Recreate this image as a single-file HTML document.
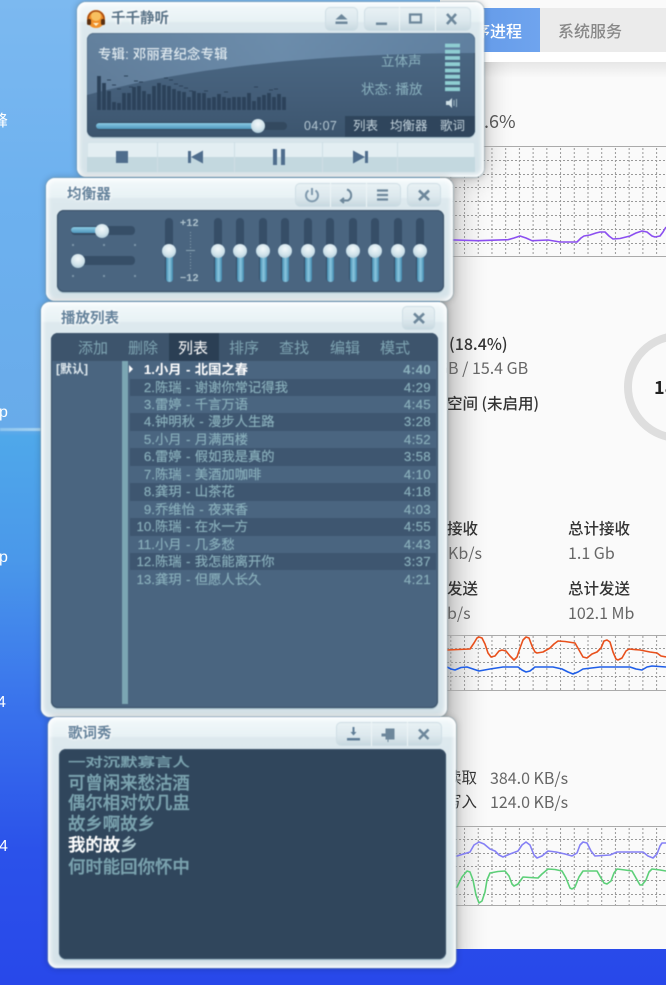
<!DOCTYPE html>
<html><head><meta charset="utf-8">
<style>
html,body{margin:0;padding:0;width:666px;height:985px;overflow:hidden}
body{position:relative;font-family:"Liberation Sans","Noto Sans CJK SC",sans-serif;background:linear-gradient(180deg,#7cb9f0 0,#6db1ef 200px,#68abea 428px,#4fa8ea 436px,#4a98ea 560px,#3a74ec 700px,#2b52ea 850px,#2848ea 985px)}
.a{position:absolute;white-space:nowrap}
.app{position:absolute;left:440px;top:0;width:226px;height:949px;background:#fafafa;font-family:"Noto Sans CJK SC","Liberation Sans",sans-serif;overflow:hidden}
.app .t{position:absolute;white-space:nowrap;color:#666;font-size:16px;line-height:20px}
.app .b{color:#333;font-weight:500;font-size:16px}
.win{position:absolute;border-radius:9px;background:linear-gradient(180deg,#f3f9fb 0,#e8f2f5 19px,#dde9ee 21px,#d5e3e9 100%);box-shadow:0 0 0 1px rgba(120,150,165,.45),0 0 7px 1px rgba(0,0,0,.18),inset 0 0 5px 2px #fff;filter:blur(.4px)}
.win .title{position:absolute;white-space:nowrap;color:#64829b;font-size:14.5px;font-weight:bold;line-height:20px;text-shadow:0 0 3px #fff,0 0 3px #fff}
.disp{position:absolute;border-radius:7px;background:#4a6580;box-shadow:inset 0 0 0 1px #3a5168,0 1px 1px #9ab5c2;overflow:hidden}
.grp{position:absolute;border:1px solid #cfdee5;border-radius:5px;background:linear-gradient(180deg,#e8f1f4 0,#dde9ee 55%,#c8d9e0 100%);box-sizing:border-box}
.grp svg{position:absolute;left:-1px;top:-1px;width:calc(100% + 2px);height:calc(100% + 2px)}
.vt{position:absolute;width:8px;height:64px;top:218px;background:#364e67;border-radius:4px}
.vf{position:absolute;left:.5px;right:.5px;bottom:0;top:33px;background:linear-gradient(90deg,#3f88ad,#8cc8e0,#3f88ad);border-radius:3px}
.kn{position:absolute;width:14px;height:14px;border-radius:7px;background:radial-gradient(circle at 50% 35%,#f2f8fa 0,#cfe2ea 55%,#94b6c8 100%)}
.row{position:absolute;left:79px;width:306px;height:17.45px;line-height:17.5px;font-size:13.3px;color:#8ab0bc;word-spacing:.7px;-webkit-text-stroke:.15px #8ab0bc}
.row .n{position:absolute;left:0;width:25px;text-align:right}
.row .s{position:absolute;left:25px;white-space:nowrap}
.row .d{position:absolute;right:5px;letter-spacing:.3px}
.row.e{background:#3e5670}
.tab{position:absolute;top:0;height:28px;line-height:29px;font-size:15px;color:#7ea4b2;white-space:nowrap}
.ly{position:absolute;left:9px;color:#7aa2ae;font-size:17.4px;line-height:20px;font-weight:500;white-space:nowrap;-webkit-text-stroke:.35px #7aa2ae}
.lb{position:absolute;color:#fff;font-size:16px;line-height:18px;white-space:nowrap;filter:blur(.3px)}
</style></head>
<body>
<!-- desktop labels -->
<div class="lb" style="left:-8px;top:113px">峰</div>
<div class="lb" style="left:-1px;top:404px">p</div>
<div class="lb" style="left:-1px;top:549px">p</div>
<div class="lb" style="left:-3px;top:694px">4</div>
<div class="lb" style="left:-1px;top:838px">4</div>
<div class="a" style="left:0;top:428px;width:41px;height:3px;background:linear-gradient(90deg,#8cc4ee,#a8d4f2);filter:blur(.5px)"></div>

<!-- app -->
<div class="app">
<div style="position:absolute;left:-100px;top:-20px;width:144px;height:197px;background:#000;opacity:.26;filter:blur(14px)"></div>
<div style="position:absolute;left:-100px;top:177px;width:115px;height:800px;background:#000;opacity:.3;filter:blur(16px)"></div>
<div style="position:absolute;left:0;top:0;width:226px;height:8px;background:#fafafa"></div>
<div style="position:absolute;left:0;top:8px;width:100px;height:44px;background:linear-gradient(90deg,#5f96e6,#6fa4ee)"></div>
<div style="position:absolute;left:100px;top:8px;width:126px;height:44px;background:#ebebeb"></div>
<div style="position:absolute;left:0;top:52px;width:226px;height:10px;background:#fff"></div>
<div style="position:absolute;left:0;top:62px;width:226px;height:16px;background:linear-gradient(180deg,rgba(0,0,0,.08),rgba(0,0,0,0))"></div>
<div class="t" style="right:144px;top:20px;color:#fff;font-weight:500;font-size:16px">应用程序进程</div>
<div class="t" style="left:118px;top:20px;color:#888;font-size:16px;font-weight:500">系统服务</div>
<div class="t" style="left:44px;top:111px;font-size:18px;color:#555">.6%</div>
<div class="t b" style="left:9px;top:333px">(18.4%)</div>
<div class="t" style="left:-3px;top:357px">GB / 15.4 GB</div>
<div class="t b" style="left:7px;top:393px;font-size:15.5px">空间 (未启用)</div>
<div class="t b" style="left:7px;top:518px;font-size:15.5px">接收</div>
<div class="t" style="left:8px;top:542px">Kb/s</div>
<div class="t b" style="left:128px;top:518px;font-size:15.5px">总计接收</div>
<div class="t" style="left:128px;top:542px">1.1 Gb</div>
<div class="t b" style="left:7px;top:578px;font-size:15.5px">发送</div>
<div class="t" style="left:7px;top:602px">b/s</div>
<div class="t b" style="left:128px;top:578px;font-size:15.5px">总计发送</div>
<div class="t" style="left:128px;top:602px">102.1 Mb</div>
<div class="t b" style="left:6px;top:767px;font-size:15.5px;font-weight:400">读取</div>
<div class="t" style="left:50px;top:767px">384.0 KB/s</div>
<div class="t b" style="left:6px;top:791px;font-size:15.5px;font-weight:400">写入</div>
<div class="t" style="left:50px;top:791px">124.0 KB/s</div>
<div class="t b" style="left:214px;top:377px;font-weight:700;font-size:18px;color:#222">18.4%</div>
</div>
<svg class="a" style="left:0;top:0" width="666" height="985" viewBox="0 0 666 985" fill="none">
<defs>
<pattern id="v" x="450.3" y="0" width="13.72" height="985" patternUnits="userSpaceOnUse"><path d="M.5 0V985" stroke="#999" stroke-dasharray="2 2"/></pattern>
</defs>
<circle cx="679" cy="387" r="51" stroke="#dedede" stroke-width="8"/>
<rect x="447" y="147" width="219" height="109" fill="url(#v)"/>
<path d="M447 160.500H666M447 174.500H666M447 187.500H666M447 201.500H666M447 215.500H666M447 229.500H666M447 243.500H666" stroke="#999" stroke-dasharray="2 2"/>
<path d="M447 146.500H666M447 256.500H666" stroke="#aaa"/>
<path fill="none" stroke="#8b4ff0" stroke-width="1.600" stroke-linejoin="round" d="M447 240L455 240 478 240.700 508 239.700 514 238 520 236 526 238 532 240.700 548 240 554 241 560 242 577 242 581 238 584 236 590 235 596 233 600 232 605 232 609 236 613 239 620 238.500 630 236 636 233 642 231 647 232 652 236 655 237 660 236 663 232 666 227"/>
<rect x="447" y="636" width="219" height="54" fill="url(#v)"/>
<path d="M447 648.500H666M447 662.500H666M447 676.500H666" stroke="#999" stroke-dasharray="2 2"/>
<path d="M447 635.500H666M447 690.500H666" stroke="#aaa"/>
<path fill="none" stroke="#e8501c" stroke-width="1.600" stroke-linejoin="round" d="M447 650L470 649 474 643 477 638 479 637 482 638 485 644 488 653 491 657 495 656 499 651 502 650 506 651 510 656 514 660 517 657 520 648 523 640 526 637 529 638 532 646 535 652 537 653 543 652 550 648 554 644 558 641 565 641.500 575 643 579 650 583 657 587 658 592 654 597 652 601 648 604 641 607 640 610 642 613 652 616 659 618 660 622 658 626 651 629 649 640 650 650 652 657 653 661 656 666 657"/>
<path fill="none" stroke="#1f5ee8" stroke-width="1.600" stroke-linejoin="round" d="M447 667L451 669 455 670 461 667.500 467 667 473 669 479 671 490 669 503 667 518 667 522 670 526 672 530 671 535 667 553 667 562 669 568 672 573 674 578 672 583 669 600 667 630 667 636 669 642 670 647 667 652 666 666 667"/>
<rect x="447" y="827" width="219" height="78" fill="url(#v)"/>
<path d="M447 839.500H666M447 853.500H666M447 866.500H666M447 880.500H666M447 894.500H666" stroke="#999" stroke-dasharray="2 2"/>
<path d="M447 826.500H666M447 905.500H666" stroke="#aaa"/>
<path fill="none" stroke="#8580f5" stroke-width="1.600" stroke-linejoin="round" d="M447 857L457 856 470 852 474 845 479 842 484 844 490 849 495 851 499 855 503 857 510 854 518 851 522 845 526 842 530 845 534 855 537 858 542 856 548 851 556 852 565 854 572 856 577 853 580 845 583 842 587 843 591 851 595 856 610 855 617 852 643 852 648 856 653 858 657 854 660 846 662 843 666 843"/>
<path fill="none" stroke="#5ccf78" stroke-width="1.600" stroke-linejoin="round" d="M447 890L457 887 462 877 467 871 470 872 473 880 476 895 479 903 482 901 485 892 487 880 490 873 498 871.500 505 871 509 876 512 884 514 886 518 884 523 877 530 877.500 538 878 542 874 548 869 555 869.500 562 871 566 878 570 888 572 889 575 887 579 877 583 871 590 871 597 871 601 878 604 883 607 884 611 881 614 873 617 869 625 870 632 871 636 878 640 885 642 885 646 880 649 872 652 869 660 870 666 871"/>
</svg>

<!-- main window -->
<div class="win" style="left:77px;top:2px;width:407px;height:175px">
 <svg class="a" style="left:8px;top:6px" width="22" height="22" viewBox="0 0 22 22"><circle cx="11" cy="11" r="9" fill="#f0902a"/><circle cx="11" cy="8" r="5" fill="#f8c060"/><path d="M3 11a8 8 0 0 1 16 0" fill="none" stroke="#a84c10" stroke-width="1.600"/><rect x="2" y="11" width="4" height="6" rx="1.500" fill="#5a3010"/><rect x="16" y="11" width="4" height="6" rx="1.500" fill="#5a3010"/><path d="M8 15h6l-3 3z" fill="#fff3d0"/></svg>
 <div class="title" style="left:34px;top:7px;color:#5a7488">千千静听</div>
 <div class="grp" style="left:248px;top:5px;width:33px;height:24px"><svg viewBox="0 0 33 24"><path d="M16.500 7l6 5.500h-12zM10.500 14.500h12v2.500h-12z" fill="#6d879b"/></svg></div>
 <div class="grp" style="left:287px;top:5px;width:107px;height:24px"><svg viewBox="0 0 107 24"><path d="M35.500 0v24M71.500 0v24" stroke="#eef5f7"/><path d="M12 15.500h11v2.500h-11z" fill="#6d879b"/><path d="M46 7.500h11v8h-11z" fill="none" stroke="#6d879b" stroke-width="2.200"/><path d="M83 7l9 10M92 7l-9 10" stroke="#6d879b" stroke-width="2.600"/></svg></div>
 <div class="disp" style="left:10px;top:31px;width:388px;height:104px;background:linear-gradient(180deg,#4c6a86 0,#445e79 60%,#3c556e 100%)">
  <svg class="a" style="left:0;top:0" width="388" height="104"><defs><linearGradient id="sw" x1="0" y1="0" x2="1" y2="0"><stop offset="0" stop-color="#7a98b6" stop-opacity=".5"/><stop offset=".5" stop-color="#7a9cbc" stop-opacity=".7"/><stop offset="1" stop-color="#6e90b2" stop-opacity=".6"/></linearGradient></defs><path d="M0 0H388V20C250 20 110 32 0 62z" fill="url(#sw)"/></svg>
  <div class="a" style="left:11px;top:13px;color:#dfe9ef;font-size:13.400px;line-height:17px;letter-spacing:.15px;font-weight:500">专辑: 邓丽君纪念专辑</div>
  <div class="a" style="left:294px;top:20px;color:#8bb2bf;font-size:13.500px;line-height:17px">立体声</div>
  <div class="a" style="left:274px;top:48px;color:#8bb2bf;font-size:13.500px;line-height:17px">状态: 播放</div>
  <svg class="a" style="left:0;top:0" width="388" height="104" fill="none">
   <path transform="translate(-87,-33)" stroke="#2c425a" stroke-width="3.800" d="M99 110V76M104 110V83M109 110V91M114 110V102M119 110V103M124 110V93M129 110V93M134 110V87M139 110V86M144 110V91M149 110V94M154 110V86M159 110V83M164 110V85M169 110V86M174 110V89M179 110V91M184 110V92M189 110V97M194 110V91M199 110V93M204 110V93M209 110V98M214 110V97M219 110V94M224 110V97M229 110V98M234 110V97M239 110V97M244 110V97M249 110V93M254 110V101M259 110V97M264 110V95M269 110V93M274 110V97M279 110V94M284 110V97"/>
   <path transform="translate(-87,-33)" stroke="#2c425a" d="M107 80h4M112 85h4M117 89h4M124 76h4M129 87h4M134 81h4M139 82h4M164 78h4M169 80h4M174 84h4M179 86h4M184 88h4M189 91h4M204 91h4M224 92h4M254 87h4M269 90h4M274 89h4"/>
   <path stroke="#8fced2" stroke-width="3.800" d="M358 12.500h15M358 18.700h15M358 25h15M358 31.200h15M358 37.500h15M358 43.700h15M358 50h15M358 56.200h15"/>
   <path d="M359 68h3l3-3v10l-3-3h-3z" fill="#cfe0e6"/><path d="M367 67v6M369.500 66v8" stroke="#9fb8c4"/>
  </svg>
  <div class="a" style="left:9px;top:89px;width:191px;height:8px;border-radius:4px;background:#33495f"></div>
  <div class="a" style="left:9px;top:90px;width:162px;height:6px;border-radius:3px;background:linear-gradient(180deg,#8ccbe4,#4e97bd)"></div>
  <div class="kn" style="left:164px;top:86px"></div>
  <div class="a" style="left:217px;top:85px;color:#b4c7d2;font-size:12.500px;line-height:16px;letter-spacing:.4px">04:07</div>
  <div class="a" style="left:258px;top:83px;width:130px;height:21px;background:#2f455c"></div>
  <div class="a" style="left:266px;top:85px;color:#c3d3dc;font-size:12.500px;line-height:16px">列表</div>
  <div class="a" style="left:303px;top:85px;color:#c3d3dc;font-size:12.500px;line-height:16px">均衡器</div>
  <div class="a" style="left:353px;top:85px;color:#c3d3dc;font-size:12.500px;line-height:16px">歌词</div>
 </div>
 <div class="grp" style="left:10px;top:140px;width:388px;height:30px;border-radius:2px;border-color:#d5e3e9;background:#e3eef2"><svg viewBox="0 0 388 30"><path d="M0 15H388V30H0z" fill="#c3d8df"/><path d="M70.500 0v30M147.500 0v30M235.500 0v30M310.500 0v30" stroke="#cfdee5"/><path d="M29 9h12v12h-12z" fill="#4f6d8d"/><path d="M101 9h3v12h-3zM104 15l12-6.500v13z" fill="#4f6d8d"/><path d="M186 7h4v16h-4zM194 7h4v16h-4z" fill="#4f6d8d"/><path d="M266 8.500l12 6.500-12 6.500zM278 9h3v12h-3z" fill="#4f6d8d"/></svg></div>
</div>

<!-- EQ -->
<div class="win" style="left:46px;top:178px;width:407px;height:123px">
 <div class="title" style="left:21px;top:7px;letter-spacing:.2px">均衡器</div>
 <div class="grp" style="left:249px;top:5px;width:106px;height:24px"><svg viewBox="0 0 106 24"><path d="M35.500 0v24M71.500 0v24" stroke="#eef5f7"/><path d="M13.500 7.500a6 6 0 1 0 7 0M17 5v7" fill="none" stroke="#7f99ad" stroke-width="2"/><path d="M52 6.500a6 6 0 0 1 1 11h-6M49 15l-3 2.500 3 2.500" fill="none" stroke="#6d879b" stroke-width="2"/><path d="M82 7.500h11M82 12h11M82 16.500h11" stroke="#6d879b" stroke-width="2.200"/></svg></div>
 <div class="grp" style="left:361px;top:5px;width:34px;height:24px"><svg viewBox="0 0 34 24"><path d="M12 7.500l10 9.500M22 7.500l-10 9.500" stroke="#6d879b" stroke-width="2.600"/></svg></div>
 <div class="disp" style="left:11px;top:32px;width:387px;height:82px">
  <div class="a" style="left:14px;top:16px;width:64px;height:9px;border-radius:4px;background:#364e67"></div>
  <div class="a" style="left:14px;top:17px;width:32px;height:6px;border-radius:3px;background:linear-gradient(180deg,#8ccbe4,#4e97bd)"></div>
  <div class="kn" style="left:38px;top:14px"></div>
  <div class="a" style="left:14px;top:46px;width:64px;height:9px;border-radius:4px;background:#364e67"></div>
  <div class="kn" style="left:14px;top:44px"></div>
  <svg class="a" style="left:0;top:0" width="387" height="82"><path d="M15 34h2v2h-2zM46 34h2v2h-2zM77 34h2v2h-2zM15 65h2v2h-2zM46 65h2v2h-2zM77 65h2v2h-2z" fill="#7b95a8"/><path d="M133.500 22V60" stroke="#8aa4b3" stroke-dasharray="1 2"/><path d="M129 40.500h9" stroke="#8aa4b3"/></svg>
  <div class="a" style="left:123px;top:7px;color:#b0c4ce;font-size:10.500px;line-height:12px;font-weight:bold;letter-spacing:.3px">+12</div>
  <div class="a" style="left:123px;top:62px;color:#b0c4ce;font-size:10.500px;line-height:12px;font-weight:bold;letter-spacing:.3px">−12</div>
 </div>
</div>
<div style="position:absolute;left:0;top:0;filter:blur(.4px)">
<div class="vt" style="left:165px"><div class="vf"></div></div><div class="kn" style="left:162px;top:244px"></div>
<div class="vt" style="left:214px"><div class="vf"></div></div><div class="kn" style="left:211px;top:244px"></div>
<div class="vt" style="left:236px"><div class="vf"></div></div><div class="kn" style="left:233px;top:244px"></div>
<div class="vt" style="left:259px"><div class="vf"></div></div><div class="kn" style="left:256px;top:244px"></div>
<div class="vt" style="left:281px"><div class="vf"></div></div><div class="kn" style="left:278px;top:244px"></div>
<div class="vt" style="left:304px"><div class="vf"></div></div><div class="kn" style="left:301px;top:244px"></div>
<div class="vt" style="left:326px"><div class="vf"></div></div><div class="kn" style="left:323px;top:244px"></div>
<div class="vt" style="left:349px"><div class="vf"></div></div><div class="kn" style="left:346px;top:244px"></div>
<div class="vt" style="left:371px"><div class="vf"></div></div><div class="kn" style="left:368px;top:244px"></div>
<div class="vt" style="left:394px"><div class="vf"></div></div><div class="kn" style="left:391px;top:244px"></div>
<div class="vt" style="left:416px"><div class="vf"></div></div><div class="kn" style="left:413px;top:244px"></div>
</div>

<!-- playlist -->
<div class="win" style="left:41px;top:302px;width:406px;height:415px">
 <div class="title" style="left:20px;top:7px">播放列表</div>
 <div class="grp" style="left:361px;top:4px;width:33px;height:24px"><svg viewBox="0 0 33 24"><path d="M12 7.500l10 9.500M22 7.500l-10 9.500" stroke="#6d879b" stroke-width="2.600"/></svg></div>
 <div class="disp" style="left:10px;top:31px;width:387px;height:375px">
  <div class="a" style="left:0;top:0;width:387px;height:28px;background:#3d546c"></div>
  <div class="a" style="left:118px;top:0;width:50px;height:28px;background:#2b3f54"></div>
  <div class="tab" style="left:27px;top:1px">添加</div>
  <div class="tab" style="left:77px;top:1px">删除</div>
  <div class="tab" style="left:127px;top:1px;color:#fff">列表</div>
  <div class="tab" style="left:178px;top:1px">排序</div>
  <div class="tab" style="left:228px;top:1px">查找</div>
  <div class="tab" style="left:279px;top:1px">编辑</div>
  <div class="tab" style="left:329px;top:1px">模式</div>
  <div class="a" style="left:5px;top:28px;color:#dfe9ee;font-size:12px;line-height:17px;font-weight:bold">[默认]</div>
  <div class="a" style="left:71px;top:28px;width:6px;height:343px;background:#7ba6b3"></div>
  <div class="row" style="top:28px;color:#fff;font-weight:bold;-webkit-text-stroke:0"><span class="a" style="left:-1px;top:4px;width:0;height:0;border-left:4px solid #fff;border-top:4px solid transparent;border-bottom:4px solid transparent"></span><span class="n">1.</span><span class="s">小月 - 北国之春</span><span class="d" style="color:#8ab0bc">4:40</span></div>
  <div class="row e" style="top:45.500px"><span class="n">2.</span><span class="s">陈瑞 - 谢谢你常记得我</span><span class="d">4:29</span></div>
  <div class="row" style="top:63px"><span class="n">3.</span><span class="s">雷婷 - 千言万语</span><span class="d">4:45</span></div>
  <div class="row e" style="top:80.400px"><span class="n">4.</span><span class="s">钟明秋 - 漫步人生路</span><span class="d">3:28</span></div>
  <div class="row" style="top:97.900px"><span class="n">5.</span><span class="s">小月 - 月满西楼</span><span class="d">4:52</span></div>
  <div class="row e" style="top:115.300px"><span class="n">6.</span><span class="s">雷婷 - 假如我是真的</span><span class="d">3:58</span></div>
  <div class="row" style="top:132.800px"><span class="n">7.</span><span class="s">陈瑞 - 美酒加咖啡</span><span class="d">4:10</span></div>
  <div class="row e" style="top:150.200px"><span class="n">8.</span><span class="s">龚玥 - 山茶花</span><span class="d">4:18</span></div>
  <div class="row" style="top:167.700px"><span class="n">9.</span><span class="s">乔维怡 - 夜来香</span><span class="d">4:03</span></div>
  <div class="row e" style="top:185.100px"><span class="n">10.</span><span class="s">陈瑞 - 在水一方</span><span class="d">4:55</span></div>
  <div class="row" style="top:202.600px"><span class="n">11.</span><span class="s">小月 - 几多愁</span><span class="d">4:43</span></div>
  <div class="row e" style="top:220px"><span class="n">12.</span><span class="s">陈瑞 - 我怎能离开你</span><span class="d">3:37</span></div>
  <div class="row" style="top:237.500px"><span class="n">13.</span><span class="s">龚玥 - 但愿人长久</span><span class="d">4:21</span></div>
 </div>
</div>

<!-- lyrics -->
<div class="win" style="left:48px;top:717px;width:408px;height:251px">
 <div class="title" style="left:20px;top:7px">歌词秀</div>
 <div class="grp" style="left:288px;top:5px;width:106px;height:24px"><svg viewBox="0 0 106 24"><path d="M35.500 0v24M71.500 0v24" stroke="#eef5f7"/><path d="M11 16h13v2.500h-13zM16.500 5h2v5h2l-3 3.500-3-3.500h2z" fill="#5f7d96"/><path d="M46 12h4V7h8v10h-8v-3h-4zM52 17v3" fill="#6d879b" stroke="#6d879b"/><path d="M83 7.500l9.500 9.500M92.500 7.500l-9.500 9.500" stroke="#6d879b" stroke-width="2.600"/></svg></div>
 <div class="disp" style="left:11px;top:32px;width:387px;height:210px;background:#30465c">
  <div class="ly" style="top:3px;transform:scaleY(.72);transform-origin:0 50%">一对沉默寡言人</div>
  <div class="ly" style="top:24px">可曾闲来愁沽酒</div>
  <div class="ly" style="top:44px">偶尔相对饮几盅</div>
  <div class="ly" style="top:65px">故乡啊故乡</div>
  <div class="ly" style="top:86px;color:#fff;-webkit-text-stroke:.35px #fff">我的故<span style="color:#a9c4cc;-webkit-text-stroke:.2px #a9c4cc">乡</span></div>
  <div class="ly" style="top:108px">何时能回你怀中</div>
 </div>
</div>
</body></html>
